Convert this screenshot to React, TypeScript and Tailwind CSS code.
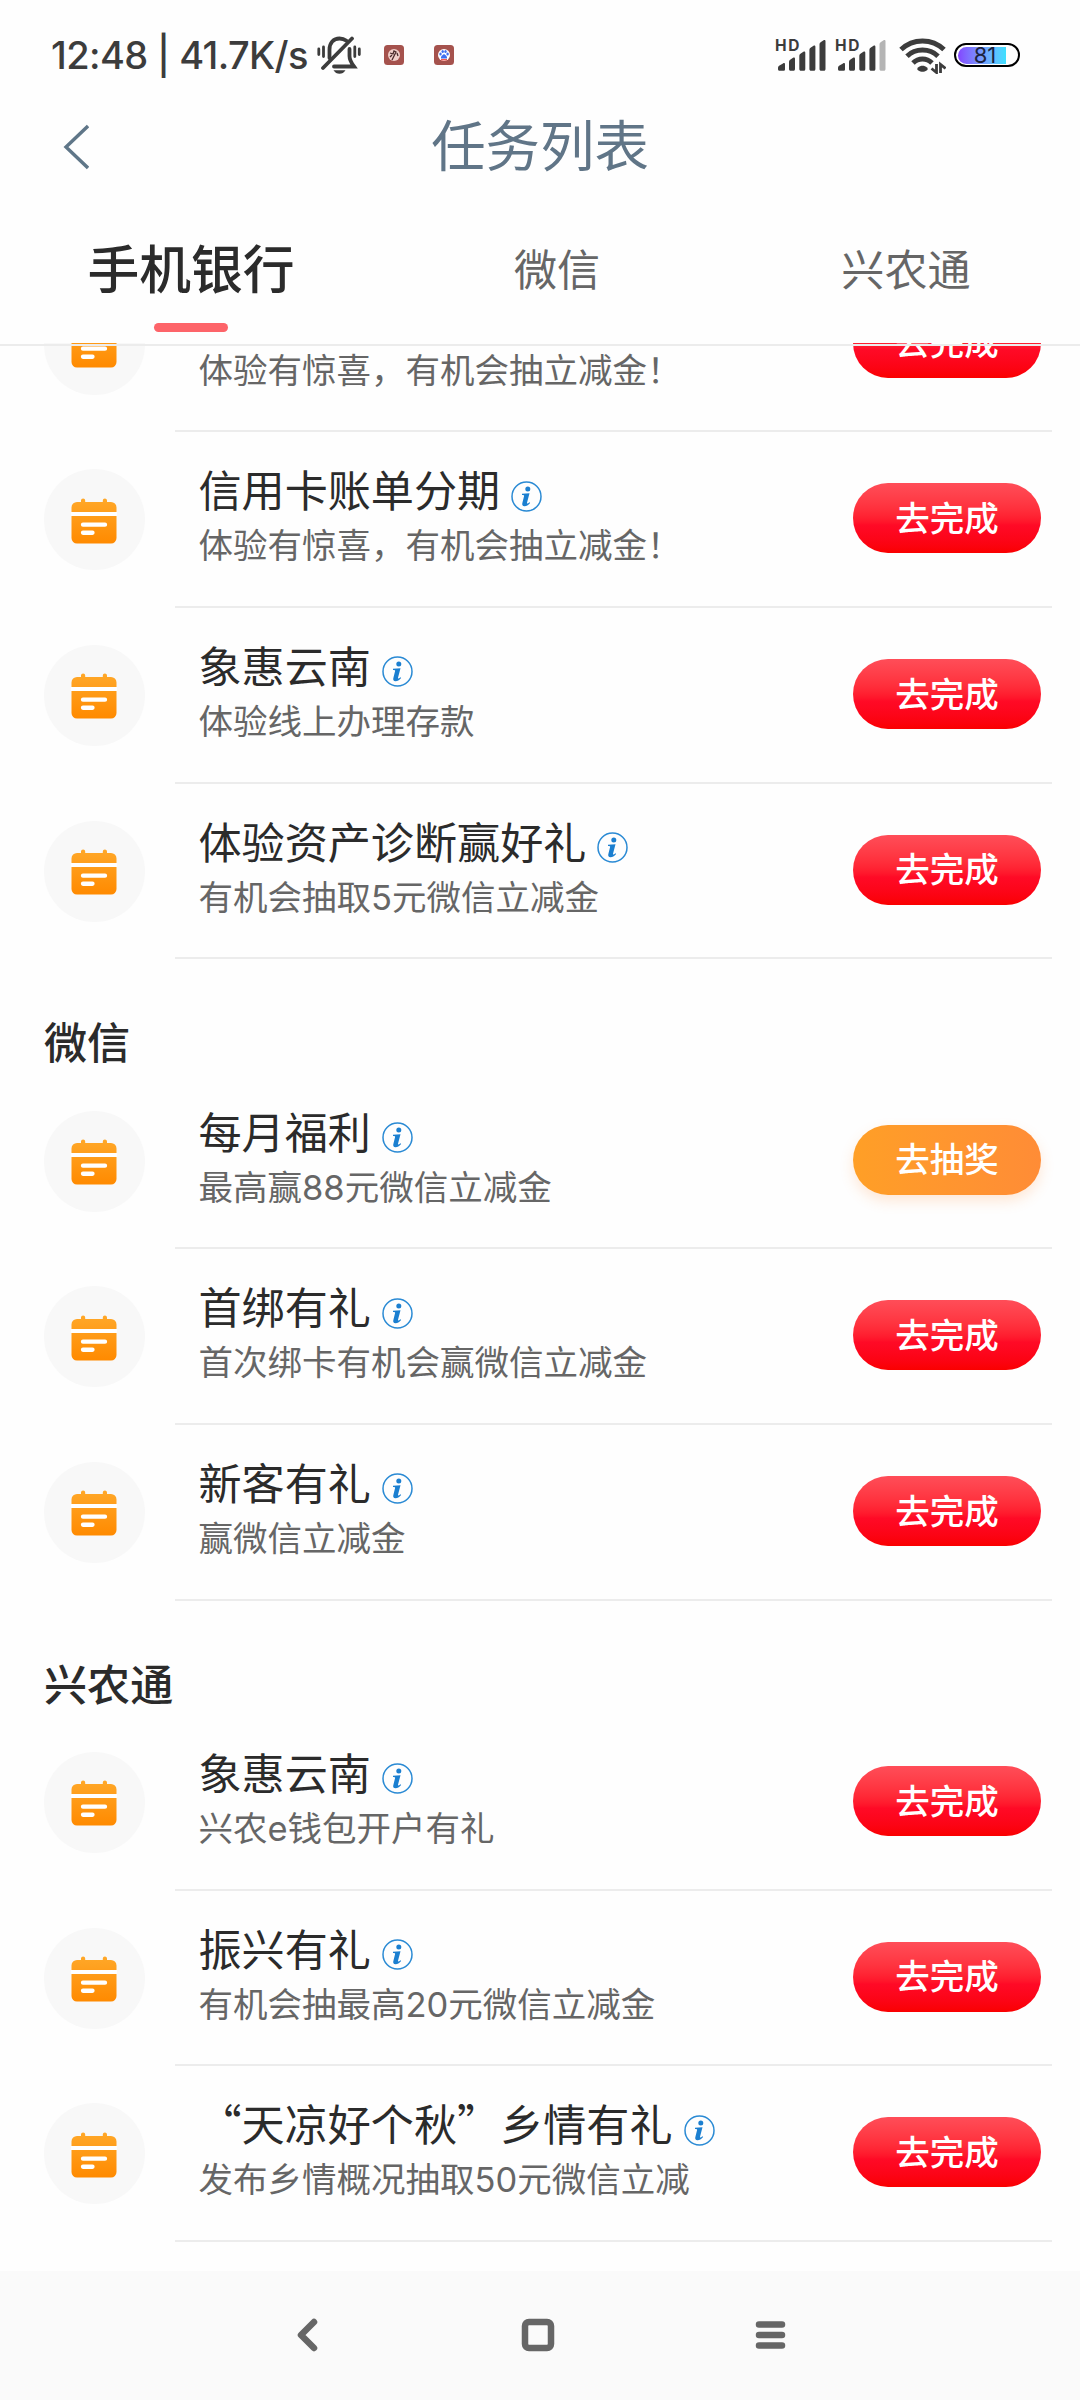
import React from "react";
import { clsx } from "clsx";

type Task = {
  title?: string;
  desc: string;
  action?: "complete" | "draw";
};

const bankTasks: Task[] = [
  // scrolled under the tabs, only its description is in view
  { desc: "体验有惊喜，有机会抽立减金！" },
  { title: "信用卡账单分期", desc: "体验有惊喜，有机会抽立减金！" },
  { title: "象惠云南", desc: "体验线上办理存款" },
  { title: "体验资产诊断赢好礼", desc: "有机会抽取5元微信立减金" },
];

const wechatTasks: Task[] = [
  { title: "每月福利", desc: "最高赢88元微信立减金", action: "draw" },
  { title: "首绑有礼", desc: "首次绑卡有机会赢微信立减金" },
  { title: "新客有礼", desc: "赢微信立减金" },
];

const ruralTasks: Task[] = [
  { title: "象惠云南", desc: "兴农e钱包开户有礼" },
  { title: "振兴有礼", desc: "有机会抽最高20元微信立减金" },
  { title: "“天凉好个秋”乡情有礼", desc: "发布乡情概况抽取50元微信立减" },
];

function MutedBell() {
  return (
    <svg width="44" height="38" viewBox="0 0 44 38" fill="none" stroke="#3c3c3c" strokeWidth="3.8" strokeLinecap="round">
      <path d="M12.500 22V13.500C12.500 7 16.500 2.500 22.500 2.500c3 0 5 .8 7 2.200" />
      <path d="M32.500 13v7c0 4 1.500 6.500 4.500 10.500H17" />
      <path d="M35 2.500 6 32" />
      <path d="M1.800 13v5.500M6.500 11v9.500M37.800 11v9.500M42.300 13v5.500" strokeWidth="2.800" />
      <path d="M16.500 34.200h12c-1.500 2.500-3.500 3.500-6 3.500s-4.500-1-6-3.500Z" fill="#3c3c3c" stroke="none" />
    </svg>
  );
}

function Signal({ weak = false }) {
  return (
    <svg width="51" height="34" viewBox="0 0 51 34" fill="#3c3c3c" className="overflow-visible">
      <text x="-1" y="13.2" fontFamily="Inter, sans-serif" fontSize="15.5" fontWeight="700" textLength="24.5">HD</text>
      <path d="M2 30c0-1 .5-1.800 1.500-2.400l3.500-2.200c1.200-.7 2-.2 2 1v4.800c0 1-.6 1.500-1.500 1.500h-4c-1 0-1.500-.7-1.500-1.500Z" />
      <path d="M13 24c0-1.200.5-2 1.500-2.600l2.600-1.700c1-.6 1.900-.2 1.900 1V31c0 1.300-.8 1.800-1.800 1.800h-2.400c-1.200 0-1.800-.6-1.800-1.800Z" />
      <path d="M23.300 18c0-1.200.5-2 1.500-2.600l2.600-1.700c1-.6 1.900-.2 1.900 1V31c0 1.300-.8 1.800-1.800 1.800h-2.400c-1.200 0-1.800-.6-1.800-1.800Z" />
      <path d="M33.400 12c0-1.200.5-2 1.500-2.600l2.600-1.700c1-.6 1.900-.2 1.900 1V31c0 1.300-.8 1.800-1.800 1.800h-2.400c-1.200 0-1.800-.6-1.800-1.800Z" />
      <path d="M43.500 6.500c0-1.200.5-2 1.500-2.600l2.600-1.700c1-.6 1.900-.2 1.900 1V31c0 1.300-.8 1.800-1.800 1.800h-2.400c-1.200 0-1.800-.6-1.800-1.800Z" fill={weak ? "#b4b4b4" : "#3c3c3c"} />
    </svg>
  );
}

function Wifi() {
  return (
    <svg width="47" height="37" viewBox="0 0 47 37" fill="none" stroke="#3c3c3c" strokeWidth="5">
      <path d="M2 12.500c12-11.500 31-11.500 43 0" />
      <path d="M8 19.200c8.500-8.200 22.500-8.200 31 0" />
      <path d="M14 26c5.500-5.300 13.500-5.300 19 0" />
      <path d="M19 30.500c2.500-2.500 6.500-2.500 9 0s-2 4.300-4.500 4.300-7-1.800-4.500-4.300Z" fill="#3c3c3c" stroke="none" />
      <path d="M37.500 27v8.500l-5-4M41.500 36v-8.500l5 4" strokeWidth="2.800" />
    </svg>
  );
}

function AppBadge({ paw = false }) {
  return (
    <svg width="20" height="20" viewBox="0 0 20 20">
      <rect width="20" height="20" rx="3.500" fill="#a5524d" />
      <circle cx="10" cy="10" r="6" fill={paw ? "#fff" : "#f0cfca"} />
      {paw ? (
        <g fill="#3f6ff0">
          <ellipse cx="6.500" cy="9" rx="1.200" ry="1.600" />
          <ellipse cx="8.700" cy="6.500" rx="1.200" ry="1.600" />
          <ellipse cx="11.500" cy="6.500" rx="1.200" ry="1.600" />
          <ellipse cx="13.600" cy="9" rx="1.200" ry="1.600" />
          <path d="M10 9c2 1 3.500 3 3 4.500H7C6.500 12 8 10 10 9Z" />
          <path d="M7 14h6v1.500H7Z" fill="#f05a50" />
        </g>
      ) : (
        <path d="M6 8l3 1 1-3 2 1-2 4-2 4M13 8l1 3M6 12l2-2" stroke="#4a2b2b" strokeWidth="1.300" fill="none" />
      )}
    </svg>
  );
}

function Battery() {
  return (
    <div className="relative flex h-6 w-[66px] items-center rounded-full border-2 border-black p-[2px]">
      <div className="h-[17px] w-12 rounded-l-full bg-linear-to-r from-[#8344ff] to-[#3ce0ff]" />
      <span className="absolute inset-x-0 pr-1 text-center font-['Inter'] text-[22px] leading-5 text-[#1c2340]">81</span>
    </div>
  );
}

function StatusBar() {
  return (
    <div className="flex h-[92px] items-center justify-between pt-[18px] pr-[60px] pl-[51px]">
      <div className="flex items-center">
        <span className="w-[266px] font-['Inter'] text-[38px] leading-none font-medium tracking-[-0.6px] whitespace-nowrap text-[#3c3c3c]">12:48 | 41.7K/s</span>
        <MutedBell />
        <div className="ml-[23px] flex gap-[30px]">
          <AppBadge />
          <AppBadge paw />
        </div>
      </div>
      <div className="flex items-center">
        <Signal />
        <div className="ml-[9px]"><Signal weak /></div>
        <div className="mr-[8px] ml-[12px]"><Wifi /></div>
        <Battery />
      </div>
    </div>
  );
}

function CalendarIcon() {
  return (
    <svg width="46" height="46" viewBox="0 0 46 46" className="relative top-px -left-px">
      <defs>
        <linearGradient id="calendar" x1="0" y1="0" x2="0" y2="1">
          <stop offset="0" stopColor="#ffa829" />
          <stop offset="1" stopColor="#ff8a00" />
        </linearGradient>
      </defs>
      <path d="M10 4V2.500a2 2 0 0 1 4.200 0V4h17.600V2.500a2 2 0 0 1 4.200 0V4h4a5.500 5.500 0 0 1 5.500 5.500V40a5.500 5.500 0 0 1-5.500 5.500H6A5.500 5.500 0 0 1 .5 40V9.500A5.500 5.500 0 0 1 6 4Z" fill="url(#calendar)" />
      <path d="M0 14h46v4H0ZM12 24.500h22a2.100 2.100 0 0 1 0 4.300H12a2.100 2.100 0 0 1 0-4.300ZM12 32.600h9.500a2.100 2.100 0 0 1 0 4.300H12a2.100 2.100 0 0 1 0-4.300Z" fill="#fff" />
    </svg>
  );
}

function InfoIcon() {
  return (
    <svg width="31" height="31" viewBox="0 0 31 31" className="mt-4 ml-[11px] shrink-0">
      <circle cx="15.500" cy="15.500" r="14.500" fill="none" stroke="#2a8ad4" strokeWidth="1.500" />
      <circle cx="16.800" cy="8" r="2.500" fill="#1b7fd0" />
      <path d="M11 12.700l7.500-.5-2.500 9.600c-.2 1.100.6 1.100 2.600-.5l.5.800c-2 2.300-3.900 3.200-5.600 3.100-2-.1-2.600-1.300-2.200-2.900l1.800-7.200c.2-1-.4-1.200-2.100-1.200Z" fill="#1b7fd0" />
    </svg>
  );
}

function TaskRow({ title, desc, action = "complete" }: Task) {
  return (
    <div className="flex h-[175.7px] shrink-0 items-start pl-[44px]">
      <div className="mt-[37px] flex size-[101px] shrink-0 items-center justify-center rounded-full bg-[#f8f8f8]">
        <CalendarIcon />
      </div>
      <div className="mr-[28px] ml-[30px] flex h-full flex-1 items-start border-b-2 border-[#ececec]">
        <div className="mt-[28px] ml-[23.500px] flex-1 whitespace-nowrap">
          <div className="flex h-[56px] items-center">
            {title && (
              <>
                <h3 className="text-[43.1px] leading-[56px] text-[#2b2b2b]">{title}</h3>
                <InfoIcon />
              </>
            )}
          </div>
          <p className="mt-[5px] font-['Inter','Noto_Sans_CJK_SC',sans-serif] text-[34.5px] leading-[50px] text-[#666]">{desc}</p>
        </div>
        <button
          type="button"
          className={clsx(
            "mt-[51px] mr-[11px] h-[70px] w-[188px] rounded-full pb-1 text-[34.5px] leading-none font-medium text-white",
            action === "draw"
              ? "bg-linear-to-r from-[#ff9f26] to-[#ff8c36] shadow-[0_6px_14px_rgba(255,140,54,0.2)]"
              : "bg-linear-to-b from-[#ff4d58] via-[#ff0a26] via-60% to-[#fa0000]"
          )}
        >
          {action === "draw" ? "去抽奖" : "去完成"}
        </button>
      </div>
    </div>
  );
}

function Section({ title, tasks }: { title?: string; tasks: Task[] }) {
  return (
    <section>
      {title && (
        <h2 className="h-[114.3px] pt-[53px] pl-[44px] text-[43.1px] leading-[56px] font-medium text-[#2b2b2b]">{title}</h2>
      )}
      {tasks.map((task, index) => (
        <TaskRow key={index} {...task} />
      ))}
    </section>
  );
}

export default function App() {
  return (
    <div className="flex h-[2400px] w-[1080px] flex-col overflow-hidden bg-[#fefefe] font-['Noto_Sans_CJK_SC',sans-serif]">
      <StatusBar />

      <header className="grid h-[108px] grid-cols-[1fr_auto_1fr] items-center">
        <svg width="26" height="46" viewBox="0 0 26 46" fill="none" stroke="#5f7688" strokeWidth="3.4" className="mt-[2px] ml-[63px]">
          <path d="M25 2 3 23l22 21" />
        </svg>
        <h1 className="pb-[5px] text-[54.4px] leading-none text-[#607587]">任务列表</h1>
      </header>

      <nav className="relative z-10 flex h-[143px] shrink-0 pt-[35px] text-[43.1px] leading-[64px] text-[#666]">
        <div className="flex w-[382px] flex-col items-center">
          <span className="text-[51.8px] font-medium text-[#2b2b2b]">手机银行</span>
          <span className="mt-[24px] h-[9px] w-[74px] rounded-full bg-[#fd6469]" />
        </div>
        <span className="w-[350px] text-center">微信</span>
        <span className="w-[348px] text-center">兴农通</span>
        <div className="absolute inset-x-0 top-[144px] h-[2px] bg-[#ececec]" />
      </nav>

      <main className="flex flex-1 flex-col justify-end overflow-hidden pb-[29px]">
        <Section tasks={bankTasks} />
        <Section title="微信" tasks={wechatTasks} />
        <Section title="兴农通" tasks={ruralTasks} />
      </main>

      <footer className="flex h-[129px] shrink-0 items-center bg-[#fafafa] pl-[297px]">
        <svg width="490" height="34" viewBox="0 0 490 34" fill="none" stroke="#666" strokeWidth="6.500" strokeLinecap="round" strokeLinejoin="round" className="mb-[2px]">
          <path d="M17 4 4 17l13 13" />
          <rect x="228" y="4" width="26" height="26" rx="4" />
          <path d="M462 6.500h23M462 17h23M462 27.500h23" />
        </svg>
      </footer>
    </div>
  );
}
